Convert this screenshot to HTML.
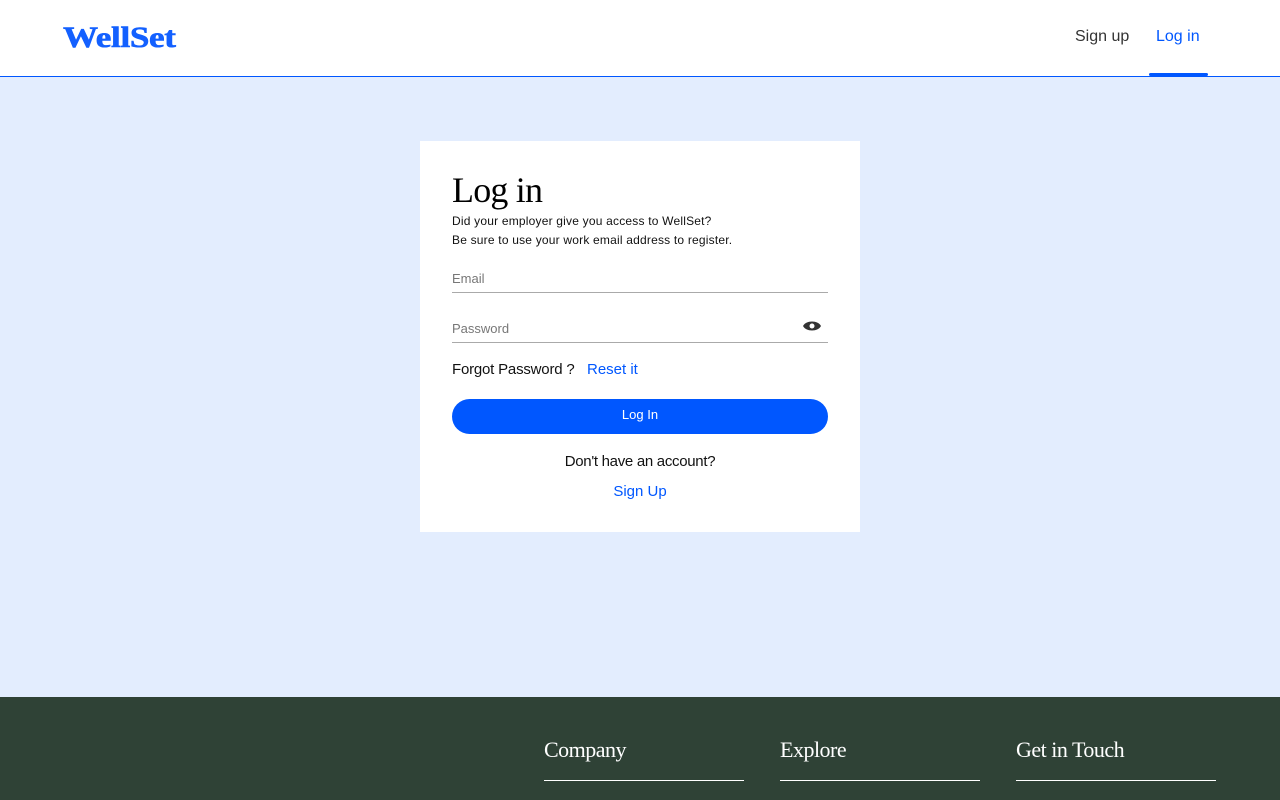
<!DOCTYPE html>
<html><head><meta charset="utf-8"><style>
*{box-sizing:border-box;margin:0;padding:0}
body{width:1280px;height:800px;overflow:hidden;font-family:"Liberation Sans",sans-serif;background:#e3edfe;position:relative}
.hdr{position:absolute;left:0;top:0;width:1280px;height:77px;background:#fff;border-bottom:1px solid #0057ff}
.logo{position:absolute;left:63px;top:21px;font-family:"Liberation Serif",serif;font-weight:bold;font-size:30px;color:#1360ff;letter-spacing:-0.3px;transform:scaleX(1.17);transform-origin:left top;-webkit-text-stroke:0.6px #1360ff}
.nav{position:absolute;top:28px;font-size:16px}
.ul{position:absolute;left:1149px;top:73px;width:59px;height:3px;background:#0057ff;border-radius:2px}
.card{position:absolute;left:420px;top:141px;width:440px;height:391px;background:#fff}
h1{position:absolute;left:32px;top:28px;font-family:"Liberation Serif",serif;font-weight:normal;font-size:36px;color:#000;letter-spacing:-0.8px}
.sub{position:absolute;left:32px;top:71px;font-size:12px;line-height:19px;color:#111;letter-spacing:0.2px}
.field{position:absolute;left:32px;width:376px;border-bottom:1px solid #aaa;height:24px;font-size:13px;color:#777;padding-top:2px}
.btn{position:absolute;left:32px;top:258px;width:376px;height:35px;background:#0057ff;border-radius:18px;color:#fff;font-size:13px;text-align:center;line-height:32px}
.ft{position:absolute;left:0;top:697px;width:1280px;height:103px;background:#2f4236}
.fh{position:absolute;top:40px;width:200px;height:44px;border-bottom:1px solid #fff;color:#fff;font-family:"Liberation Serif",serif;font-size:22px;letter-spacing:-0.5px}
</style></head><body>
<div class="hdr">
<div class="logo">WellSet</div>
<div class="nav" style="left:1075px;color:#333">Sign up</div>
<div class="nav" style="left:1156px;color:#0057ff">Log in</div>
<div class="ul"></div>
</div>
<div class="card">
<h1>Log in</h1>
<div class="sub">Did your employer give you access to WellSet?<br>Be sure to use your work email address to register.</div>
<div class="field" style="top:128px">Email</div>
<div class="field" style="top:178px">Password
<svg style="position:absolute;right:6px;top:0" width="20" height="14" viewBox="0 0 20 14"><path d="M1 7C4 1 16 1 19 7C16 13 4 13 1 7Z" fill="#333"/><circle cx="10" cy="7" r="2.5" fill="#fff"/></svg></div>
<div style="position:absolute;left:32px;top:220px;font-size:15px;color:#111;letter-spacing:-0.2px">Forgot Password ?</div>
<div style="position:absolute;left:167px;top:220px;font-size:15px;color:#0057ff">Reset it</div>
<div class="btn">Log In</div>
<div style="position:absolute;left:0;width:440px;top:312px;text-align:center;font-size:15px;color:#111;letter-spacing:-0.3px">Don't have an account?</div>
<div style="position:absolute;left:0;width:440px;top:342px;text-align:center;font-size:15px;color:#0057ff">Sign Up</div>
</div>
<div class="ft">
<div class="fh" style="left:544px">Company</div>
<div class="fh" style="left:780px">Explore</div>
<div class="fh" style="left:1016px">Get in Touch</div>
</div>
</body></html>
